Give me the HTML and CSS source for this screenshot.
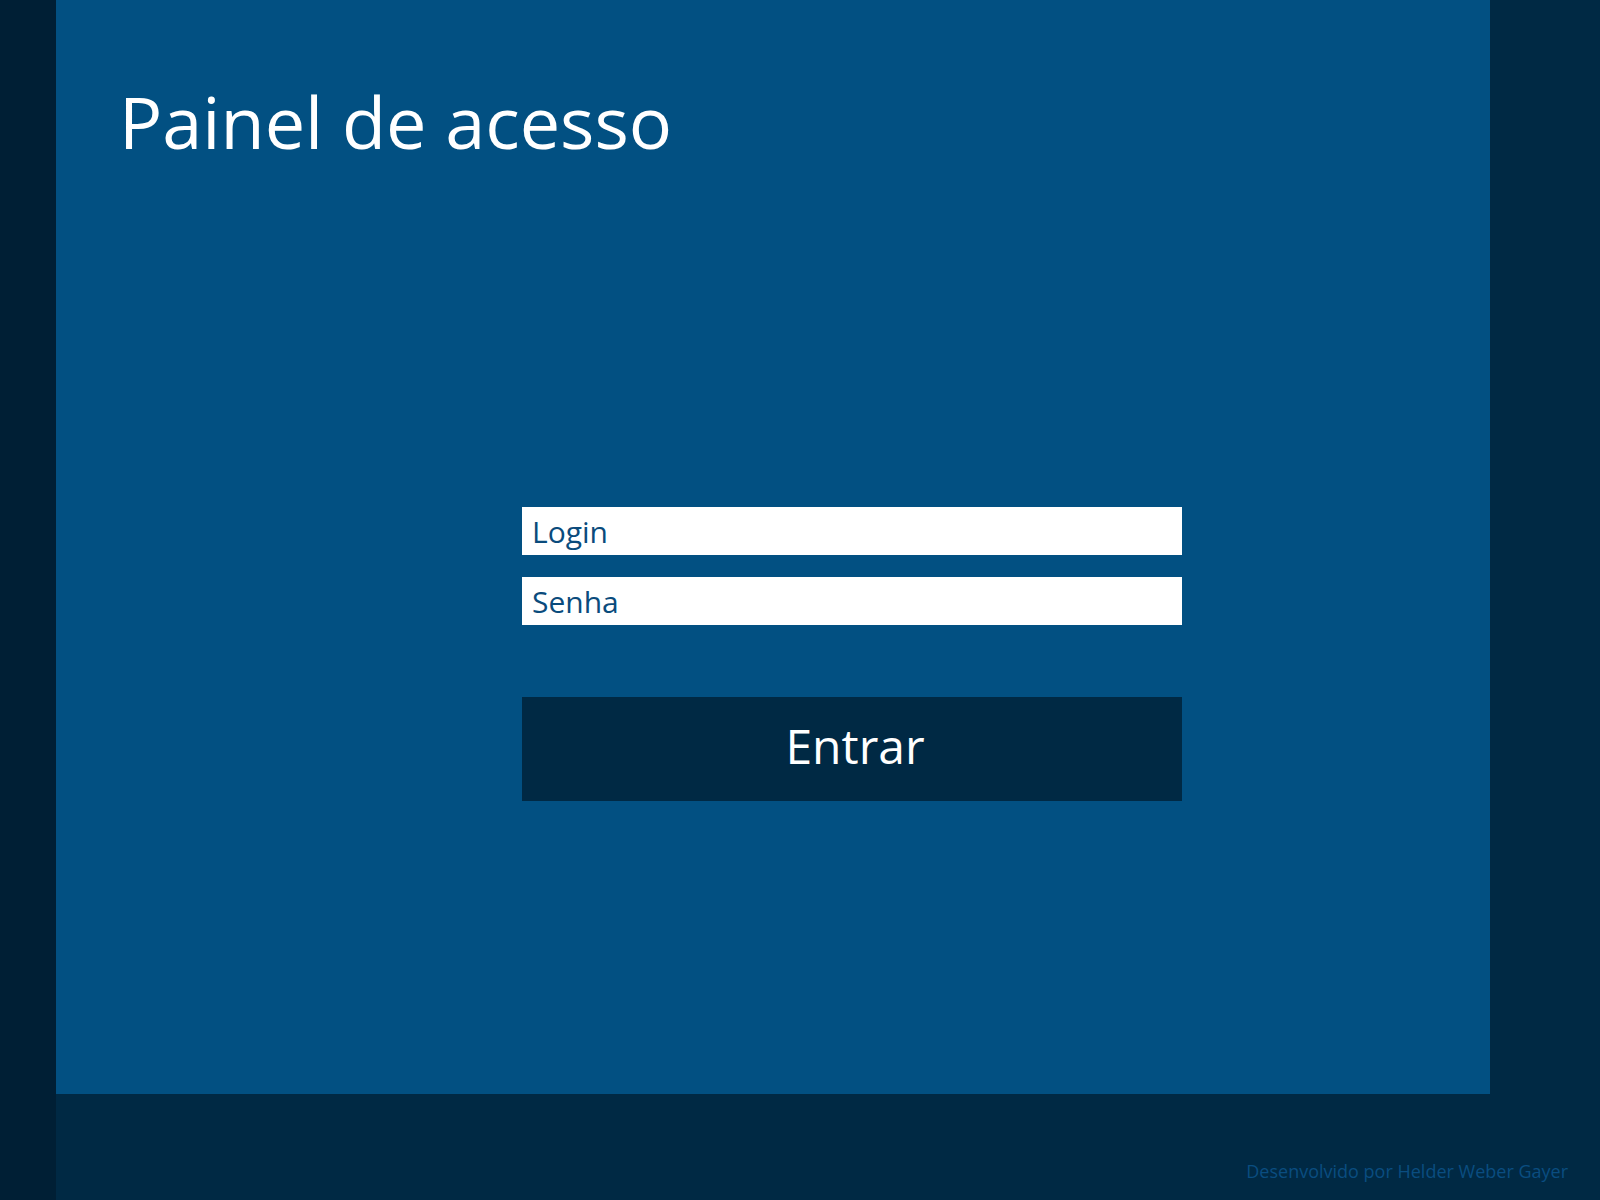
FILE: index.html
```html
<!DOCTYPE html>
<html lang="pt-BR">
<head>
<meta charset="utf-8">
<title>Painel de acesso</title>
<link rel="stylesheet" href="styles.css">
</head>
<body>
<div class="page">
  <aside class="strip"></aside>
  <div class="main">
    <section class="panel">
      <h1 class="title">Painel de acesso</h1>
      <form class="login-form" onsubmit="return false;">
        <input class="field" type="text" value="Login">
        <input class="field" type="text" value="Senha">
        <button class="submit" type="submit">Entrar</button>
      </form>
    </section>
    <footer class="footer">Desenvolvido por Helder Weber Gayer</footer>
  </div>
</div>
</body>
</html>
```

FILE: styles.css
```css
html, body {
  margin: 0;
  padding: 0;
  height: 100%;
}
body {
  background: #002944;
  font-family: "Open Sans", "Noto Sans", sans-serif;
  overflow: hidden;
}
.page {
  display: flex;
  height: 1200px;
}
.strip {
  width: 56px;
  flex: none;
  background: #001f35;
}
.main {
  flex: 1;
  display: flex;
  flex-direction: column;
}
.panel {
  width: 1434px;
  height: 1094px;
  box-sizing: border-box;
  background: #025082;
  padding: 72px 0 0 63px;
}
.title {
  margin: 0;
  font-size: 72px;
  font-weight: 400;
  line-height: 98px;
  color: #ffffff;
}
.login-form {
  display: flex;
  flex-direction: column;
  width: 660px;
  margin: 337px 0 0 403px;
}
.field {
  height: 48px;
  box-sizing: border-box;
  border: 0;
  margin: 0 0 22px 0;
  padding: 0 10px;
  background: #ffffff;
  color: #0a4b7c;
  font-family: "Open Sans", "Noto Sans", sans-serif;
  font-size: 30px;
  outline: none;
}
.field:last-of-type {
  margin-bottom: 72px;
}
.submit {
  height: 104px;
  border: 0;
  padding: 0 0 7px 6px;
  background: #002944;
  color: #ffffff;
  font-family: "Open Sans", "Noto Sans", sans-serif;
  font-size: 48px;
  cursor: pointer;
}
.footer {
  flex: 1;
  display: flex;
  align-items: flex-end;
  justify-content: flex-end;
  padding: 0 32px 17px 0;
  color: #0a4d80;
  font-size: 18px;
}
```
